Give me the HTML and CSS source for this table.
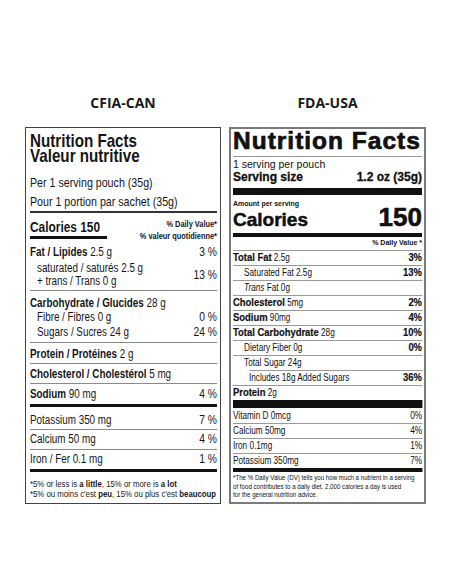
FILE: index.html
```html
<!DOCTYPE html>
<html lang="en">
<head>
<meta charset="utf-8">
<title>Nutrition labels</title>
<link rel="stylesheet" href="styles.css">
</head>
<body>
<div class="page">
  <section class="col col-left">
    <h2 class="col-title">CFIA-CAN</h2>
    <div class="cfia">
      <div class="cfia-body">
        <div class="c-title">Nutrition Facts<br>Valeur nutritive</div>
        <div class="c-serv">
          <div>Per 1 serving pouch (35g)</div>
          <div>Pour 1 portion par sachet (35g)</div>
        </div>
        <div class="c-cal">
          <div>
            <div class="c-cal-text">Calories 150</div>
            <div class="c-cal-bar"></div>
          </div>
          <div class="c-dv">% Daily Value*<br>% valeur quotidienne*</div>
        </div>
        <div class="c-group c-fat">
          <div class="c-row"><span><b>Fat / Lipides</b> 2.5 g</span><span class="c-pct">3 %</span></div>
          <div class="c-sub">
            <div class="c-sub-lines">
              <div class="c-l14">saturated / saturés 2.5 g</div>
              <div class="c-l13">+ trans / Trans 0 g</div>
            </div>
            <span class="c-pct c-mid">13 %</span>
          </div>
        </div>
        <div class="c-group c-carb">
          <div class="c-row"><span><b>Carbohydrate / Glucides</b> 28 g</span></div>
          <div class="c-row c-l15 c-ind"><span>Fibre / Fibres 0 g</span><span class="c-pct">0 %</span></div>
          <div class="c-row c-l15 c-ind"><span>Sugars / Sucres 24 g</span><span class="c-pct">24 %</span></div>
        </div>
        <div class="c-row c-line c-protein"><span><b>Protein / Protéines</b> 2 g</span></div>
        <div class="c-row c-line c-chol"><span><b>Cholesterol / Cholestérol</b> 5 mg</span></div>
        <div class="c-row c-thick c-sodium"><span><b>Sodium</b> 90 mg</span><span class="c-pct">4 %</span></div>
        <div class="c-row c-line c-pot"><span>Potassium 350 mg</span><span class="c-pct">7 %</span></div>
        <div class="c-row c-line c-calc"><span>Calcium 50 mg</span><span class="c-pct">4 %</span></div>
        <div class="c-row c-thick c-iron"><span>Iron / Fer 0.1 mg</span><span class="c-pct">1 %</span></div>
        <div class="c-foot">
          <div>*5% or less is <b>a little</b>, 15% or more is <b>a lot</b></div>
          <div>*5% ou moins c'est <b>peu</b>, 15% ou plus c'est <b>beaucoup</b></div>
        </div>
      </div>
    </div>
  </section>

  <section class="col col-right">
    <h2 class="col-title">FDA-USA</h2>
    <div class="fda">
      <div class="f-title">Nutrition Facts</div>
      <div class="f-serv">
        <div class="f-servings">1 serving per pouch</div>
        <div class="f-size"><span>Serving size</span><span>1.2 oz (35g)</span></div>
      </div>
      <div class="f-amount">Amount per serving</div>
      <div class="f-cal"><span class="f-cal-label">Calories</span><span class="f-cal-num">150</span></div>
      <div class="f-dv">% Daily Value *</div>
      <div class="f-body">
        <div class="f-row"><span><b>Total Fat</b> 2.5g</span><b>3%</b></div>
        <div class="f-row f-ind"><span>Saturated Fat 2.5g</span><b>13%</b></div>
        <div class="f-row f-ind"><span><i>Trans</i> Fat 0g</span></div>
        <div class="f-row"><span><b>Cholesterol</b> 5mg</span><b>2%</b></div>
        <div class="f-row"><span><b>Sodium</b> 90mg</span><b>4%</b></div>
        <div class="f-row"><span><b>Total Carbohydrate</b> 28g</span><b>10%</b></div>
        <div class="f-row f-ind"><span>Dietary Fiber 0g</span><b>0%</b></div>
        <div class="f-row f-ind f-sugar"><span>Total Sugar 24g</span></div>
        <div class="f-row f-ind2"><span>Includes 18g Added Sugars</span><b>36%</b></div>
        <div class="f-row f-protein"><span><b>Protein</b> 2g</span></div>
        <div class="f-row f-vit"><span>Vitamin D 0mcg</span><span>0%</span></div>
        <div class="f-row"><span>Calcium 50mg</span><span>4%</span></div>
        <div class="f-row"><span>Iron 0.1mg</span><span>1%</span></div>
        <div class="f-row f-last"><span>Potassium 350mg</span><span>7%</span></div>
        <div class="f-foot">*The % Daily Value (DV) tells you how much a nutrient in a serving<br>of food contributes to a daily diet. 2,000 calories a day is used<br>for the general nutrition advice.</div>
      </div>
    </div>
  </section>
</div>
</body>
</html>
```

FILE: styles.css
```css
* {
  box-sizing: border-box;
  margin: 0;
  padding: 0;
}

body {
  margin: 0;
  background: #fff;
  color: #161616;
}

.page {
  display: flex;
  gap: 8px;
  padding: 93px 0 0 25px;
}

.col {
  display: flex;
  flex-direction: column;
}

.col-left { width: 196px; }
.col-right { width: 197px; }

.col-title {
  font: 700 14px/20px "Open Sans", "Liberation Sans", sans-serif;
  text-align: center;
  margin-bottom: 14px;
  color: #1a1a1a;
}

/* ---------- CFIA (Canada) ---------- */
.cfia {
  height: 377px;
  border: 1px solid #444;
  padding: 5px 3px 0 4px;
  font-family: "Liberation Sans", Arial, sans-serif;
  font-size: 12px;
  color: #161616;
}

/* condensed type: the whole label body is narrowed horizontally */
.cfia-body {
  width: 228px;
  transform: scaleX(0.82);
  transform-origin: 0 0;
}

.c-title {
  height: 30px;
  font-weight: 700;
  font-size: 18.5px;
  line-height: 15px;
  white-space: nowrap;
}

.c-serv {
  height: 50px;
  padding-top: 10px;
  font-size: 13px;
  line-height: 19px;
  border-bottom: 2px solid #333;
  white-space: nowrap;
}

.c-cal {
  height: 29px;
  display: flex;
  justify-content: space-between;
  align-items: flex-start;
  padding-top: 6px;
}

.c-cal-text {
  font-weight: 700;
  font-size: 14.5px;
  line-height: 16px;
}

.c-cal-bar {
  margin-top: 1px;
  width: 94px;
  height: 3px;
  background: #111;
}

.c-dv {
  font-weight: 700;
  font-size: 9px;
  line-height: 11.5px;
  text-align: right;
}

.c-row {
  display: flex;
  justify-content: space-between;
  line-height: 14px;
  white-space: nowrap;
}

.c-pct { font-size: 12.5px; }

.c-group { border-bottom: 1px solid #8a8a8a; padding-bottom: 2px; }
.c-fat { height: 49px; padding-top: 3px; }
.c-carb { height: 52px; padding-top: 5px; }

.c-sub {
  display: flex;
  justify-content: space-between;
  margin-top: 2px;
  white-space: nowrap;
}

.c-sub-lines { padding-left: 8.5px; }
.c-l14 { height: 14px; line-height: 14px; }
.c-l13 { height: 13px; line-height: 13px; }
.c-mid { align-self: center; line-height: 14px; }

.c-l15 { height: 15px; line-height: 15px; }
.c-ind { padding-left: 8.5px; }

.c-line { border-bottom: 1px solid #8a8a8a; }
.c-thick { border-bottom: 3px solid #111; }

.c-protein { height: 21px; padding: 4px 0 2px; }
.c-chol { height: 20px; padding: 3px 0 2px; }
.c-sodium { height: 23px; padding: 3px 0 3px; }
.c-pot { height: 23px; padding: 6px 0 2px; }
.c-calc { height: 20px; padding: 2px 0 3px; }
.c-iron { height: 22px; padding: 2px 0 3px; }

.c-foot {
  padding-top: 7px;
  font-size: 9.5px;
  line-height: 10px;
  white-space: nowrap;
}

/* ---------- FDA (USA) ---------- */
.fda {
  border: 2px solid #7a7a7a;
  padding: 0 2px;
  font-family: "Liberation Sans", Arial, sans-serif;
  color: #111;
}

.f-title {
  height: 28px;
  font-weight: 700;
  font-size: 24.5px;
  line-height: 24px;
  letter-spacing: 1px;
  -webkit-text-stroke: 0.7px #111;
  padding-bottom: 3px;
  border-bottom: 1px solid #9a9a9a;
  white-space: nowrap;
}

.f-serv {
  height: 38px;
  padding-top: 1px;
  padding-bottom: 4px;
  border-bottom: 7px solid #111;
}

.f-servings {
  font-size: 10.5px;
  line-height: 13px;
}

.f-size {
  display: flex;
  justify-content: space-between;
  font-weight: 700;
  font-size: 12px;
  line-height: 13px;
  -webkit-text-stroke: 0.3px #111;
}

.f-amount {
  height: 13px;
  font-weight: 700;
  font-size: 7px;
  line-height: 8px;
  padding-top: 5px;
}

.f-cal {
  height: 29px;
  display: flex;
  justify-content: space-between;
  align-items: baseline;
  font-weight: 700;
  border-bottom: 4px solid #111;
}

.f-cal-label {
  font-size: 19px;
  line-height: 18px;
  -webkit-text-stroke: 0.5px #111;
}

.f-cal-num {
  font-size: 26px;
  line-height: 18px;
  -webkit-text-stroke: 0.6px #111;
}

.f-dv {
  height: 14px;
  font-weight: 700;
  font-size: 7px;
  line-height: 9px;
  text-align: right;
  padding: 1px 0 3px;
  border-bottom: 1px solid #9a9a9a;
}

/* narrow nutrient rows */
.f-body {
  width: 230.5px;
  transform: scaleX(0.82);
  transform-origin: 0 0;
  font-size: 10px;
}

.f-body b {
  font-weight: 700;
  font-size: 11.5px;
  line-height: 13px;
  -webkit-text-stroke: 0.2px #111;
}

.f-row {
  height: 15px;
  display: flex;
  justify-content: space-between;
  align-items: baseline;
  line-height: 14px;
  border-bottom: 1px solid #9a9a9a;
  white-space: nowrap;
}

.f-ind { padding-left: 13.5px; }
.f-ind2 { padding-left: 19.5px; }

.f-sugar {
  border-bottom-color: transparent;
  background: linear-gradient(#9a9a9a, #9a9a9a) 19.5px 100% / calc(100% - 19.5px) 1px no-repeat;
  background-origin: border-box;
}

.f-protein { height: 22px; border-bottom: 8px solid #111; }
.f-vit { height: 16px; padding-top: 1px; }
.f-last { height: 18px; border-bottom: 4px solid #111; }

.f-foot {
  padding: 2px 0 2px;
  font-size: 7.5px;
  line-height: 8.5px;
  white-space: nowrap;
}
```
